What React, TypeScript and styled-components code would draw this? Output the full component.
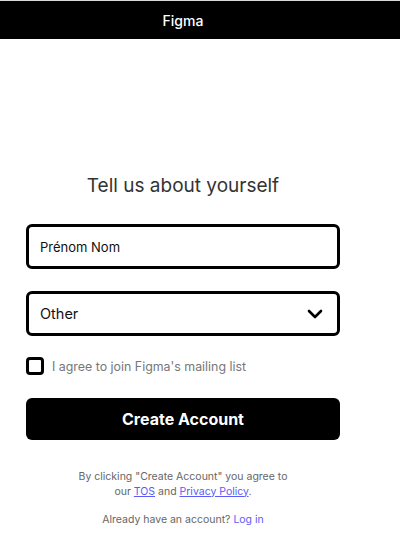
import React from "react";
import styled, { createGlobalStyle } from "styled-components";

const Global = createGlobalStyle`
  html, body { margin: 0; padding: 0; background: #fff; }
  body { font-family: Inter, "Noto Sans", sans-serif; }
  * { box-sizing: border-box; }
`;

const Page = styled.div`
  width: 400px;
  height: 539px;
  border-top: 1px solid #d9d9d9;
  display: flex;
  flex-direction: column;
`;

const TopBar = styled.header`
  height: 38px;
  background: #000;
  display: flex;
  align-items: center;
  justify-content: center;
  padding-right: 34px;
  color: #fff;
  font-size: 14px;
  font-weight: 500;
`;

const Main = styled.main`
  width: 366px;
  padding: 135px 26px 0 26px;
  display: flex;
  flex-direction: column;
`;

const Title = styled.h1`
  margin: 0 0 26px;
  text-align: center;
  font-size: 19px;
  font-weight: 400;
  color: #333;
  line-height: 24px;
`;

const Field = styled.div`
  height: 45px;
  border: 3px solid #000;
  border-radius: 6px;
  display: flex;
  align-items: center;
  justify-content: space-between;
  padding: 0 14px 0 11px;
  margin-bottom: 22px;
`;

const FieldText = styled.span<{ $size: number }>`
  font-size: ${(p) => p.$size}px;
  color: #111;
`;

const CheckRow = styled.label`
  display: flex;
  align-items: center;
  gap: 8px;
  margin-top: -1px;
  height: 18px;
`;

const Box = styled.span`
  width: 18px;
  height: 18px;
  border: 3px solid #000;
  border-radius: 4px;
  display: inline-block;
`;

const CheckText = styled.span`
  font-size: 12.4px;
  color: #777;
`;

const Button = styled.button`
  margin-top: 23px;
  height: 42px;
  border: none;
  border-radius: 6px;
  background: #000;
  color: #fff;
  font-family: Inter, sans-serif;
  font-weight: 700;
  font-size: 16px;
`;

const Legal = styled.p`
  margin: 30px 0 0;
  text-align: center;
  font-size: 10.5px;
  line-height: 14.5px;
  color: #666;
`;

const Link = styled.a`
  color: #5b5bf5;
  text-decoration: underline;
`;

const Already = styled.p`
  margin: 14px 0 0;
  text-align: center;
  font-size: 10.5px;
  color: #666;
`;

const Plain = styled.a`
  color: #5b5bf5;
  text-decoration: none;
`;

export default function App() {
  return (
    <>
      <Global />
      <Page>
        <TopBar>Figma</TopBar>
        <Main>
          <Title>Tell us about yourself</Title>
          <Field>
            <FieldText $size={13}>Prénom Nom</FieldText>
          </Field>
          <Field>
            <FieldText $size={14.5}>Other</FieldText>
            <svg width="16" height="10" viewBox="0 0 16 10">
              <path d="M2 2 L8 8 L14 2" fill="none" stroke="#000" strokeWidth="2.6" strokeLinecap="round" strokeLinejoin="round" />
            </svg>
          </Field>
          <CheckRow>
            <Box />
            <CheckText>I agree to join Figma's mailing list</CheckText>
          </CheckRow>
          <Button>Create Account</Button>
          <Legal>
            By clicking "Create Account" you agree to
            <br />
            our <Link>TOS</Link> and <Link>Privacy Policy</Link>.
          </Legal>
          <Already>
            Already have an account? <Plain>Log in</Plain>
          </Already>
        </Main>
      </Page>
    </>
  );
}
